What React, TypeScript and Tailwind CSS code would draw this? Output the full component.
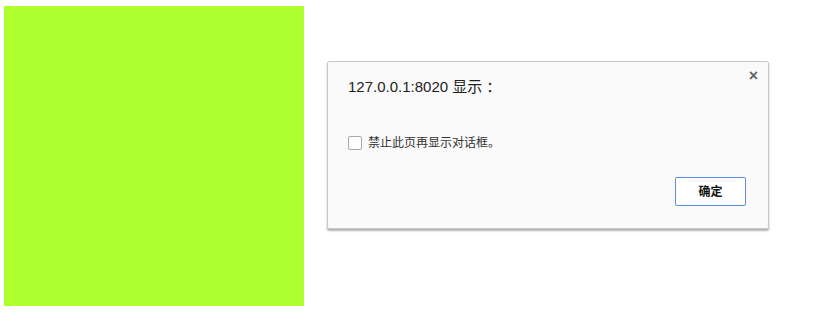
import React from 'react';

const font = { fontFamily: '"Liberation Sans", "Noto Sans CJK SC", sans-serif' };

export default function App() {
  return (
    <div className="relative w-[819px] h-[333px] bg-white" style={font}>
      <div className="ml-[4px] pt-[6px]">
        <div className="w-[300px] h-[300px] bg-[#adff2f]" />
      </div>

      <div className="absolute left-[327px] top-[61px] w-[442px] h-[168px] bg-[#fafafa] border border-[#c8c8c8] rounded-[2px] shadow-[0_2px_2px_rgba(0,0,0,0.3)] flex flex-col">
        <button className="absolute right-[10px] top-[6px] text-[#666] text-[16px] leading-none font-bold">×</button>
        <div className="pl-[20px] pt-[15px] text-[15px] text-[#222] leading-[20px]">
          127.0.0.1:8020 显示<span className="ml-[4px]">：</span>
        </div>
        <label className="flex items-center gap-[6px] pl-[20px] mt-[37px] text-[12px] text-[#333]">
          <span className="w-[14px] h-[14px] border border-[#a8a8a8] rounded-[2px] bg-white" />
          <span>禁止此页再显示对话框。</span>
        </label>
        <div className="flex justify-end pr-[22px] mt-[25px]">
          <button className="w-[71px] h-[29px] border border-[#5a8de6] rounded-[2px] bg-white text-[12px] font-bold text-[#111]">
            确定
          </button>
        </div>
      </div>
    </div>
  );
}
